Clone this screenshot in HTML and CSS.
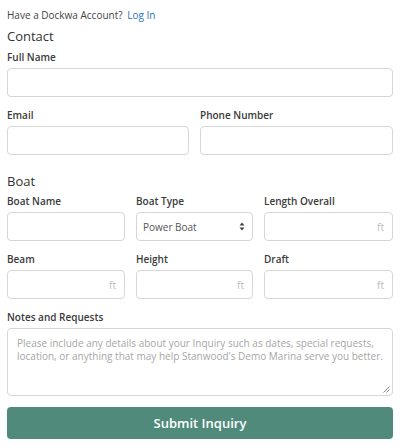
FILE: index.html
```html
<!DOCTYPE html>
<html>
<head>
<meta charset="utf-8">
<link rel="stylesheet" href="styles.css">
</head>
<body>
<form class="form">
  <p class="account">Have a Dockwa Account? <a class="link" href="#">Log In</a></p>

  <h2 class="section">Contact</h2>
  <div class="field">
    <label class="label">Full Name</label>
    <div class="input"></div>
  </div>
  <div class="row two">
    <div class="field">
      <label class="label">Email</label>
      <div class="input"></div>
    </div>
    <div class="field">
      <label class="label">Phone Number</label>
      <div class="input"></div>
    </div>
  </div>

  <h2 class="section boat">Boat</h2>
  <div class="row three">
    <div class="field">
      <label class="label">Boat Name</label>
      <div class="input"></div>
    </div>
    <div class="field">
      <label class="label">Boat Type</label>
      <div class="input select"><span class="value">Power Boat</span>
        <svg class="arrows" width="6" height="9" viewBox="0 0 6 9"><path d="M3 0.5 L5.5 3.5 H0.5 Z M3 8.5 L5.5 5.5 H0.5 Z" fill="#444"/></svg>
      </div>
    </div>
    <div class="field">
      <label class="label">Length Overall</label>
      <div class="input unit"><span class="ft">ft</span></div>
    </div>
  </div>
  <div class="row three">
    <div class="field">
      <label class="label">Beam</label>
      <div class="input unit"><span class="ft">ft</span></div>
    </div>
    <div class="field">
      <label class="label">Height</label>
      <div class="input unit"><span class="ft">ft</span></div>
    </div>
    <div class="field">
      <label class="label">Draft</label>
      <div class="input unit"><span class="ft">ft</span></div>
    </div>
  </div>

  <div class="field">
    <label class="label">Notes and Requests</label>
    <div class="input textarea">
      <span class="placeholder">Please include any details about your Inquiry such as dates, special requests, location, or anything that may help Stanwood's Demo Marina serve you better.</span>
      <svg class="grip" width="7" height="7" viewBox="0 0 7 7"><path d="M6.5 0.5 L0.5 6.5 M6.5 3.5 L3.5 6.5" stroke="#888" stroke-width="1"/></svg>
    </div>
  </div>

  <button class="submit" type="button">Submit Inquiry</button>
</form>
</body>
</html>
```

FILE: styles.css
```css
* { box-sizing: border-box; }
html, body { margin: 0; padding: 0; background: #fff; }
body {
  font-family: "Open Sans", "Liberation Sans", sans-serif;
  color: #333;
  width: 400px;
  height: 448px;
  overflow: hidden;
}
.form {
  padding: 8px 7px 0 7px;
  display: flex;
  flex-direction: column;
}
.account {
  margin: 0;
  font-size: 10px;
  line-height: 14px;
  color: #444;
}
.link { color: #2a72b5; text-decoration: none; margin-left: 2px; }
.section {
  margin: 5px 0 5px 0;
  font-size: 13px;
  line-height: 18px;
  font-weight: 400;
  color: #333;
}
.section.boat { margin-top: 6px; margin-bottom: 4px; }
.field {
  display: flex;
  flex-direction: column;
  margin-bottom: 11px;
}
.label {
  font-size: 10px;
  line-height: 14px;
  font-weight: 600;
  color: #3a3a3a;
  margin-bottom: 4px;
}
.input {
  height: 29px;
  border: 1px solid #d6d6d6;
  border-radius: 4px;
  background: #fff;
  display: flex;
  align-items: center;
  padding: 0 8px 0 6px;
  font-size: 10px;
}
.row { display: grid; column-gap: 11px; }
.row.two { grid-template-columns: 182px 1fr; }
.row.three { grid-template-columns: 118px 117px 1fr; }
.select { justify-content: space-between; color: #555; }
.arrows { display: block; margin-right: -1px; }
.unit { justify-content: flex-end; }
.ft { color: #bbb; font-size: 10px; }
.textarea {
  height: 68px;
  align-items: flex-start;
  padding: 8px 8px 0 9px;
  position: relative;
}
.placeholder {
  color: #a6a6a6;
  font-size: 10px;
  line-height: 12.5px;
}
.grip { position: absolute; right: 2px; bottom: 2px; }
.submit {
  margin-top: 0;
  height: 32px;
  border: 0;
  border-radius: 4px;
  background: #4f8a7a;
  color: #fff;
  font-family: "Open Sans", "Liberation Sans", sans-serif;
  font-size: 13px;
  font-weight: 600;
}
```
